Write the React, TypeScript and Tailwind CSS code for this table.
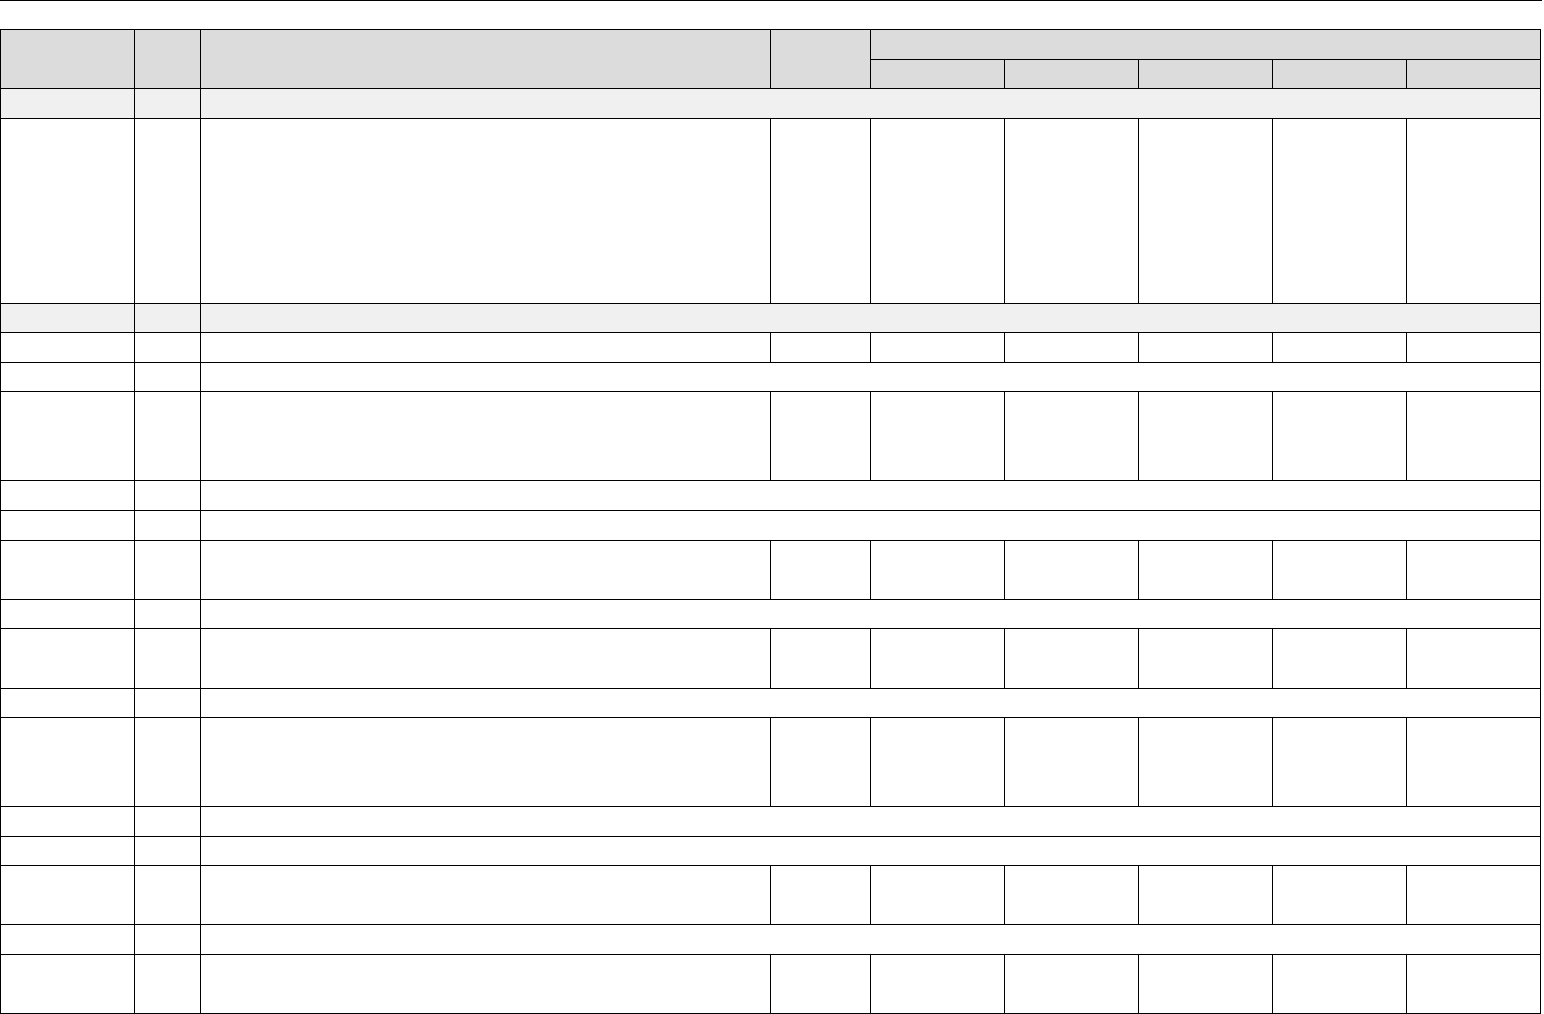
const rowH: Record<number, string> = {
  28: 'h-[28px]',
  29: 'h-[29px]',
  58: 'h-[58px]',
  59: 'h-[59px]',
  88: 'h-[88px]',
  184: 'h-[184px]',
};

type Row = { kind: 'full' | 'span'; h: number; shaded?: boolean };

const rows: Row[] = [
  { kind: 'span', h: 29, shaded: true },
  { kind: 'full', h: 184 },
  { kind: 'span', h: 28, shaded: true },
  { kind: 'full', h: 29 },
  { kind: 'span', h: 28 },
  { kind: 'full', h: 88 },
  { kind: 'span', h: 29 },
  { kind: 'span', h: 29 },
  { kind: 'full', h: 58 },
  { kind: 'span', h: 28 },
  { kind: 'full', h: 59 },
  { kind: 'span', h: 28 },
  { kind: 'full', h: 88 },
  { kind: 'span', h: 29 },
  { kind: 'span', h: 28 },
  { kind: 'full', h: 58 },
  { kind: 'span', h: 29 },
  { kind: 'full', h: 58 },
];

function TableRow({ row }: { row: Row }) {
  const bg = row.shaded ? 'bg-[#f0f0f0]' : 'bg-white';
  const h = rowH[row.h];
  if (row.kind === 'span') {
    return (
      <>
        <div className={`${bg} ${h}`} />
        <div className={`${bg} ${h}`} />
        <div className={`${bg} ${h} col-span-7`} />
      </>
    );
  }
  return (
    <>
      {Array.from({ length: 9 }).map((_, i) => (
        <div key={i} className={`${bg} ${h}`} />
      ))}
    </>
  );
}

export default function App() {
  return (
    <div className="w-[1544px] min-h-[1014px] bg-white font-['Liberation_Sans',sans-serif] text-sm text-black">
      <div className="h-px w-[1542px] bg-black" />
      <div className="mt-[28px] grid w-fit grid-cols-[133px_65px_569px_99px_133px_133px_133px_133px_133px] gap-px bg-black p-px">
        {/* header */}
        <div className="row-span-2 bg-[#dcdcdc]" />
        <div className="row-span-2 bg-[#dcdcdc]" />
        <div className="row-span-2 bg-[#dcdcdc]" />
        <div className="row-span-2 bg-[#dcdcdc]" />
        <div className="col-span-5 h-[29px] bg-[#dcdcdc]" />
        <div className="h-[28px] bg-[#dcdcdc]" />
        <div className="h-[28px] bg-[#dcdcdc]" />
        <div className="h-[28px] bg-[#dcdcdc]" />
        <div className="h-[28px] bg-[#dcdcdc]" />
        <div className="h-[28px] bg-[#dcdcdc]" />

        {rows.map((r, i) => (
          <TableRow key={i} row={r} />
        ))}
      </div>
    </div>
  );
}
